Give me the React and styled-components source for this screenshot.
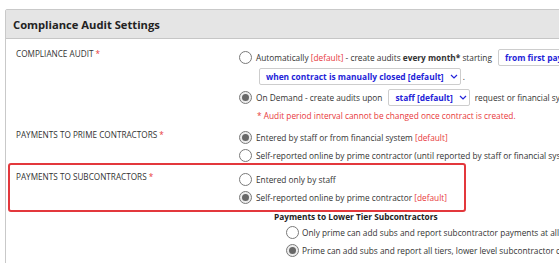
import React from "react";
import styled, { createGlobalStyle } from "styled-components";

const GlobalStyle = createGlobalStyle`
  html, body {
    margin: 0;
    padding: 0;
    overflow: hidden;
    background: #fff;
  }
  body {
    font-family: "Open Sans", "Liberation Sans", sans-serif;
    color: #333;
  }
`;

const Chevron = () => (
  <svg width="8" height="5" viewBox="0 0 8 5">
    <path d="M1 1 L4 4 L7 1" fill="none" stroke="#2323d8" strokeWidth="1.2" />
  </svg>
);

const Radio = ({ checked }) => <RadioDot $checked={checked} />;

const Option = ({ checked, children }) => (
  <OptionLine>
    <Radio checked={checked} />
    <span>{children}</span>
  </OptionLine>
);

const Select = ({ children, chevron = true }) => (
  <SelectBox>
    {children}
    {chevron && <Chevron />}
  </SelectBox>
);

const App = () => {
  return (
    <>
      <GlobalStyle />
      <Page>
        <Panel>
          <Header>Compliance Audit Settings</Header>
          <Body>
            <Row>
              <Label>
                Compliance Audit <Star>*</Star>
              </Label>
              <Options>
                <FirstLine>
                  <Radio />
                  <span>
                    Automatically <Default>[default]</Default> - create audits{" "}
                    <b>every month*</b> starting
                  </span>
                  <Select chevron={false}>from first payment</Select>
                </FirstLine>
                <SubLine>
                  <Select>when contract is manually closed [default]</Select>
                  <span>.</span>
                </SubLine>
                <DemandLine>
                  <Radio checked />
                  <span>On Demand - create audits upon</span>
                  <Select>staff [default]</Select>
                  <span>request or financial system</span>
                </DemandLine>
                <Note>* Audit period interval cannot be changed once contract is created.</Note>
              </Options>
            </Row>
            <Row $top={7}>
              <Label>
                Payments to Prime Contractors <Star>*</Star>
              </Label>
              <Options>
                <Option checked>
                  Entered by staff or from financial system <Default>[default]</Default>
                </Option>
                <Option>
                  Self-reported online by prime contractor (until reported by staff or financial system)
                </Option>
              </Options>
            </Row>
            <HighlightRow>
              <Label>
                Payments to Subcontractors <Star>*</Star>
              </Label>
              <Options>
                <Option>Entered only by staff</Option>
                <Option checked>
                  Self-reported online by prime contractor <Default>[default]</Default>
                </Option>
              </Options>
            </HighlightRow>
            <Row>
              <Label />
              <Options>
                <TierBlock>
                  <TierTitle>Payments to Lower Tier Subcontractors</TierTitle>
                  <TierOptions>
                    <Option>Only prime can add subs and report subcontractor payments at all tiers</Option>
                    <Option checked>
                      Prime can add subs and report all tiers, lower level subcontractor can report
                    </Option>
                  </TierOptions>
                </TierBlock>
              </Options>
            </Row>
          </Body>
        </Panel>
      </Page>
    </>
  );
};

export default App;

const Page = styled.div`
  width: 559px;
  height: 263px;
  overflow: hidden;
  padding: 9px 0 0 5px;
  box-sizing: border-box;
`;

const Panel = styled.div`
  width: 760px;
  height: 400px;
  border: 1px solid #c9c9c9;
  border-radius: 2px;
`;

const Header = styled.div`
  height: 28px;
  display: flex;
  align-items: center;
  padding-left: 7px;
  background: #e5e5e5;
  border-bottom: 1px solid #c6c6c6;
  font-size: 11.2px;
  font-weight: 700;
  color: #222;
`;

const Body = styled.div`
  padding: 9px 0 0 2px;
`;

const Row = styled.div`
  display: flex;
  margin-top: ${(p) => p.$top || 0}px;
  padding-left: 8px;
  width: 458px;
  box-sizing: border-box;
`;

const HighlightRow = styled(Row)`
  margin-top: -1px;
  padding: 6px 0 3.5px 6px;
  border: 2px solid #e3383c;
  border-radius: 3px;
`;

const Label = styled.div`
  width: 223px;
  flex-shrink: 0;
  font-size: 8.2px;
  line-height: 11px;
  text-transform: uppercase;
  color: #333;
`;

const Star = styled.span`
  color: #e8383b;
`;

const Options = styled.div`
  display: flex;
  flex-direction: column;
  font-size: 8.3px;
  white-space: nowrap;
`;

const OptionLine = styled.div`
  display: flex;
  align-items: center;
  gap: 4px;
  height: 17.5px;
`;

const FirstLine = styled(OptionLine)`
  height: 19px;
`;

const DemandLine = styled(OptionLine)`
  height: 19px;
  margin-top: 3px;
`;

const SubLine = styled.div`
  display: flex;
  align-items: center;
  gap: 1px;
  margin: 1px 0 0 18px;
  height: 17px;
`;

const RadioDot = styled.span`
  position: relative;
  width: 11px;
  height: 11px;
  flex-shrink: 0;
  border-radius: 50%;
  border: 1px solid #7a7a7a;
  background: ${(p) => (p.$checked ? "#ececec" : "#fff")};

  &::after {
    content: "";
    display: ${(p) => (p.$checked ? "block" : "none")};
    position: absolute;
    left: 2px;
    top: 2px;
    width: 7px;
    height: 7px;
    border-radius: 50%;
    background: #676767;
  }
`;

const Default = styled.span`
  color: #e8383b;
`;

const SelectBox = styled.span`
  display: inline-flex;
  align-items: center;
  gap: 6px;
  height: 15px;
  margin: 0 1px 0 2px;
  padding: 0 2px 0 6px;
  border: 1px solid #cdcdcd;
  border-radius: 2px;
  background: #fff;
  color: #2323d8;
  font-weight: 700;
  font-size: 8.4px;
`;

const Note = styled.div`
  margin: 3px 0 0 18px;
  line-height: 12px;
  color: #e8383b;
`;

const TierBlock = styled.div`
  margin-left: 35px;
`;

const TierTitle = styled.div`
  font-weight: 700;
  color: #222;
  line-height: 10px;
`;

const TierOptions = styled.div`
  margin-left: 12px;
  padding-top: 2px;

  & > div {
    gap: 3px;
    height: 18px;
  }
`;
